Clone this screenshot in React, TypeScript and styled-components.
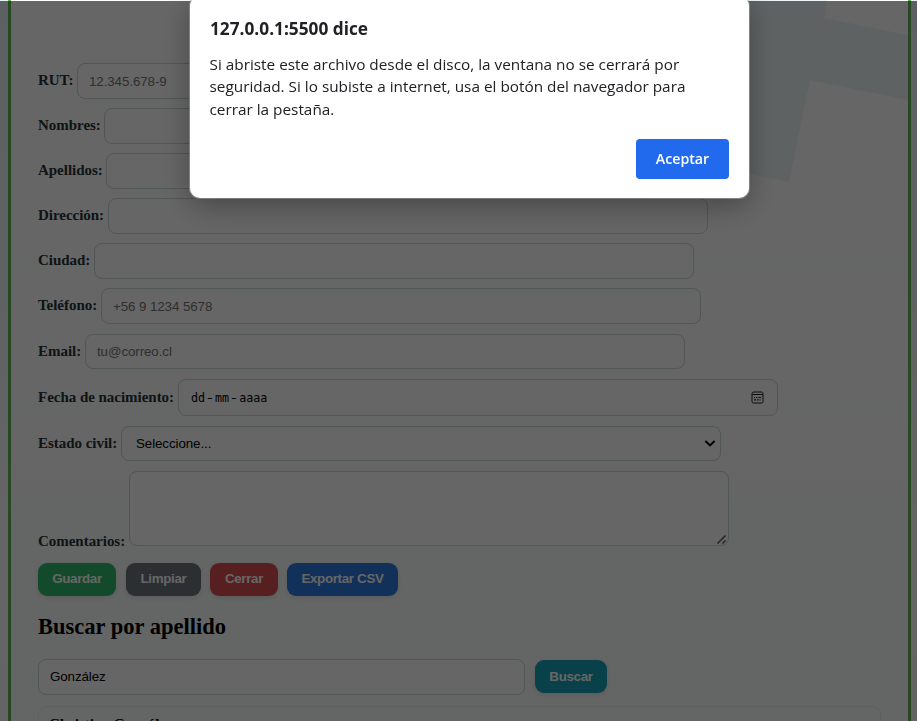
import React from 'react';
import styled, { createGlobalStyle, css } from 'styled-components';

const Global = createGlobalStyle`
  * { box-sizing: border-box; }
  html, body { margin: 0; padding: 0; height: 721px; overflow: hidden; }
`;

const Page = styled.div`
  position: relative;
  display: flex;
  height: 721px;
  padding: 0 6px 0 8px;
  overflow: hidden;
  background: linear-gradient(180deg, #e8f1f5 0%, #eef5f6 40%, #fdfdfd 75%, #f8fbfa 100%);
`;

const Sheet = styled.main`
  position: relative;
  flex: 1;
  height: 760px;
  padding: 63px 27px 0;
  border: solid #63b359;
  border-width: 0 3px;
  background: linear-gradient(180deg, #fff 0, #fff 235px, #fcfefd 300px, #fefefe 420px, #fbfdfc 520px, #fafdfc 100%);
`;

const Watermark = styled.svg`
  position: absolute;
  top: 0;
  right: 0;
`;

const Form = styled.form`
  position: relative;
  display: flex;
  flex-direction: column;
`;

const Row = styled.div<{ $h: number; $gap: number }>`
  display: flex;
  align-items: center;
  height: ${(p) => p.$h}px;
  margin-bottom: ${(p) => p.$gap}px;
`;

const Label = styled.label<{ $w: number; $bottom?: boolean; $lift?: boolean }>`
  flex: none;
  width: ${(p) => p.$w}px;
  font: bold 15px/17px 'Liberation Serif', serif;
  letter-spacing: -0.03px;
  color: #263238;
  white-space: nowrap;
  ${(p) => p.$lift && css`padding-bottom: 2px;`}
  ${(p) => p.$bottom && css`align-self: flex-end; margin-bottom: -4px;`}
`;

const field = css`
  flex: none;
  width: 600px;
  height: 100%;
  margin: 0;
  border: 1px solid #c9d9d6;
  border-radius: 8px;
  background: #fff;
  color: #000;
  font: 13.333px 'Liberation Sans', Arial, sans-serif;
  letter-spacing: -0.08px;
  outline: none;
`;

const Input = styled.input<{ $w?: number; $lift?: boolean }>`
  ${field}
  padding: 0 11px ${(p) => (p.$lift ? 2 : 0)}px;
  ${(p) => p.$w && css`width: ${p.$w}px;`}
  &::placeholder { color: #757575; }
`;

const DateField = styled.div`
  ${field}
  display: flex;
  align-items: center;
  padding: 1px 13px 0 12px;
  font: 11.7px 'DejaVu Sans Mono', monospace;
  letter-spacing: 0;
  svg { margin: -2px 0 0 auto; }
`;

const Dash = styled.span`
  width: 10px;
  text-align: center;
  transform: scaleX(1.4);
`;

const FieldWrap = styled.div`
  position: relative;
  height: 100%;
`;

const Chevron = styled.svg`
  position: absolute;
  right: 5px;
  top: 13px;
`;

const Grip = styled.svg`
  position: absolute;
  right: 2px;
  bottom: 1px;
`;

const Select = styled.select`
  ${field}
  appearance: none;
  padding: 0 0 0 14px;
`;

const Area = styled.textarea`
  ${field}
  display: block;
  resize: none;
`;

const Button = styled.button<{ $w: number; $bg: string }>`
  width: ${(p) => p.$w}px;
  height: 33px;
  padding: 0 0 2px;
  border: 0;
  border-radius: 9px;
  background: ${(p) => p.$bg};
  color: #fff;
  font: bold 13.333px 'Liberation Sans', Arial, sans-serif;
  letter-spacing: -0.32px;
  box-shadow: 0 2px 5px rgba(0, 0, 0, 0.1);
  white-space: nowrap;
`;

const Actions = styled.div`
  display: flex;
  gap: 9px;
  margin-top: 7px;
  ${Button}:first-child { margin-right: 1px; }
`;

const Heading = styled.h2`
  position: relative;
  margin: 17px 0 19px;
  font: bold 22.5px/27px 'Liberation Serif', serif;
  color: #000;
`;

const Search = styled.div`
  position: relative;
  display: flex;
  align-items: flex-start;
  gap: 10px;
  height: 36px;
  ${Button} { margin-top: 1px; padding-bottom: 1px; }
`;

const Result = styled.article`
  position: relative;
  height: 60px;
  margin-top: 11px;
  padding: 9px 10px;
  border: 1px solid #eaf0ee;
  border-radius: 9px;
  font: bold 15px/17px 'Liberation Serif', serif;
  color: #000;
`;

const Backdrop = styled.div`
  position: fixed;
  inset: 1px 0 0;
  background: rgba(0, 0, 0, 0.6);
`;

const Dialog = styled.section`
  position: fixed;
  top: -4px;
  left: 190px;
  display: flex;
  flex-direction: column;
  width: 559px;
  height: 202px;
  padding: 21px 20px 19px;
  border-radius: 10px;
  background: #fff;
  box-shadow: 0 0 0 1px rgba(160, 160, 160, 0.6), 0 8px 30px rgba(0, 0, 0, 0.32);
  font-family: 'Open Sans', 'Noto Sans', sans-serif;
  color: #202124;
`;

const Title = styled.h1`
  margin: 0;
  font-size: 17.25px;
  line-height: 23px;
  font-weight: 700;
`;

const Message = styled.p`
  margin: 13px 0 0 -0.5px;
  font-size: 15.33px;
  line-height: 22.4px;
  white-space: nowrap;
`;

const Accept = styled.button`
  width: 93px;
  height: 40px;
  margin: auto 0 0 auto;
  padding: 0 0 2px;
  border: 0;
  border-radius: 4px;
  background: #216aed;
  color: #fff;
  font: 600 14.2px 'Open Sans', 'Noto Sans', sans-serif;
`;

const CalendarIcon = () => (
  <svg width="13" height="13" viewBox="0 0 13 13" fill="none" stroke="#222">
    <rect x="1" y="1" width="11" height="11" rx="1.5" />
    <path d="M1 3.5h11" />
    <path d="M5 6.5h1.5M7.5 6.5h2.5M3 8.8h2M6 8.8h1.5M3 6.5h1M8.5 8.8h1" strokeWidth="1.2" />
  </svg>
);

const textFields = [
  { label: 'RUT:', w: 39, hint: '12.345.678-9', h: 36, gap: 9 },
  { label: 'Nombres:', w: 66, h: 36, gap: 9 },
  { label: 'Apellidos:', w: 68, h: 36, gap: 9 },
  { label: 'Dirección:', w: 70, h: 36, gap: 9 },
  { label: 'Ciudad:', w: 56, h: 36, gap: 9 },
  { label: 'Teléfono:', w: 63, hint: '+56 9 1234 5678', h: 36, gap: 10 },
  { label: 'Email:', w: 47, hint: 'tu@correo.cl', h: 35, gap: 10 },
];

export default function App() {
  return (
    <>
      <Global />
      <Page>
        <Sheet>
          <Watermark width="200" height="190" viewBox="708 0 200 190" fill="#ecf6f7">
            <path d="M708 0H827L824 18L908 35V100L810 80L789 182L708 165Z" />
          </Watermark>
          <Form>
            {textFields.map((f) => (
              <Row key={f.label} $h={f.h} $gap={f.gap}>
                <Label $w={f.w} $lift={f.h === 36}>{f.label}</Label>
                <Input placeholder={f.hint} />
              </Row>
            ))}
            <Row $h={37} $gap={10}>
              <Label $w={140}>Fecha de nacimiento:</Label>
              <DateField>
                dd<Dash>-</Dash>mm<Dash>-</Dash>aaaa
                <CalendarIcon />
              </DateField>
            </Row>
            <Row $h={35} $gap={10}>
              <Label $w={83}>Estado civil:</Label>
              <FieldWrap>
                <Select>
                  <option>Seleccione...</option>
                </Select>
                <Chevron width="12" height="9" viewBox="0 0 12 9" fill="none" stroke="#000" strokeWidth="2">
                  <path d="M1.4 2L6 6.4L10.6 2" />
                </Chevron>
              </FieldWrap>
            </Row>
            <Row $h={75} $gap={10}>
              <Label $w={91} $bottom>Comentarios:</Label>
              <FieldWrap>
                <Area />
                <Grip width="11" height="11" viewBox="0 0 11 11" fill="none" stroke="#555" strokeWidth="1.5">
                  <path d="M1.5 9.5L9.5 1.5M6.5 9.5L9.5 6.5" />
                </Grip>
              </FieldWrap>
            </Row>
            <Actions>
              <Button type="button" $w={78} $bg="#30ba6b">Guardar</Button>
              <Button type="button" $w={75} $bg="#6c757d">Limpiar</Button>
              <Button type="button" $w={68} $bg="#d94f4f">Cerrar</Button>
              <Button type="button" $w={111} $bg="#2d7be0">Exportar CSV</Button>
            </Actions>
          </Form>
          <Heading>Buscar por apellido</Heading>
          <Search>
            <Input $w={487} $lift defaultValue="González" />
            <Button $w={72} $bg="#17a2b8">Buscar</Button>
          </Search>
          <Result>Christian González</Result>
        </Sheet>
        <Backdrop />
        <Dialog role="alertdialog">
          <Title>127.0.0.1:5500 dice</Title>
          <Message>
            Si abriste este archivo desde el disco, la ventana no se cerrará por
            <br />
            seguridad. Si lo subiste a internet, usa el botón del navegador para
            <br />
            cerrar la pestaña.
          </Message>
          <Accept>Aceptar</Accept>
        </Dialog>
      </Page>
    </>
  );
}
